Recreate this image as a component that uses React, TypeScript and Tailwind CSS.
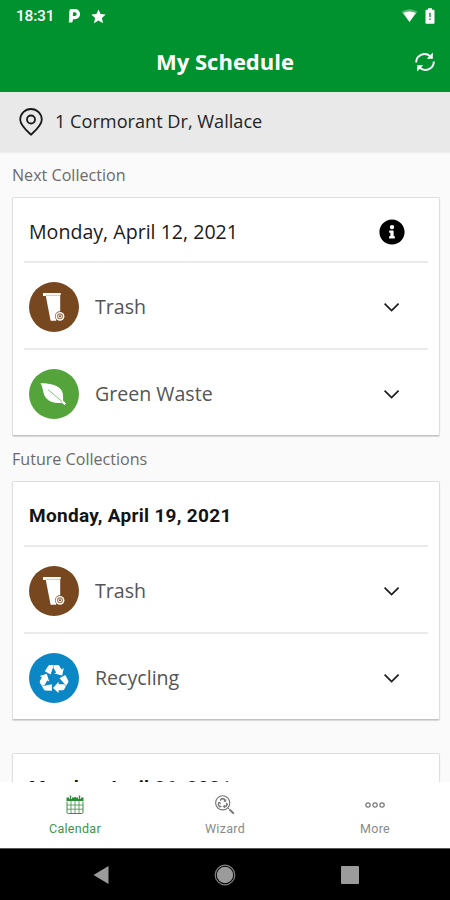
import type { ReactNode } from 'react';
import { FaInfoCircle } from 'react-icons/fa';

type WasteKind = 'trash' | 'green' | 'recycling';

interface Collection {
  date: string;
  next?: boolean;
  items: { kind: WasteKind; name: string }[];
}

const nextCollection: Collection = {
  date: 'Monday, April 12, 2021',
  next: true,
  items: [
    { kind: 'trash', name: 'Trash' },
    { kind: 'green', name: 'Green Waste' },
  ],
};

const futureCollections: Collection[] = [
  {
    date: 'Monday, April 19, 2021',
    items: [
      { kind: 'trash', name: 'Trash' },
      { kind: 'recycling', name: 'Recycling' },
    ],
  },
  {
    date: 'Monday, April 26, 2021',
    items: [],
  },
];

const wasteColors: Record<WasteKind, string> = {
  trash: 'bg-[#774720]',
  green: 'bg-[#55a43b]',
  recycling: 'bg-[#0a87c4]',
};

function BinIcon() {
  return (
    <svg width="50" height="50" viewBox="0 0 50 50" fill="none">
      <path d="M14 11H31.7V13H31.2V31L27 38.7H21.6L16.8 14H14Z" fill="#fff" />
      <path d="M16.5 13.3H31" stroke="#c9b3a1" strokeWidth="0.8" />
      <circle cx="31" cy="34.3" r="5" fill="#774720" />
      <circle cx="31" cy="34.3" r="4.4" fill="#fff" />
      <circle cx="31" cy="34.3" r="2.4" stroke="#9b7658" strokeWidth="1.1" />
      <circle cx="31" cy="34.3" r="1" fill="#774720" />
    </svg>
  );
}

function LeafIcon() {
  return (
    <svg width="50" height="50" viewBox="0 0 50 50" fill="none">
      <path
        d="M11.5 14C20 14.5 27.5 15.5 31.5 20C34.3 23.2 34.4 27.5 34 31.5L37 34.5L35.5 36L32.5 33.8C28 34.6 21.5 33.8 17.5 29.5C13.6 25.3 14.3 18.5 11.5 14Z"
        fill="#fff"
      />
      <path d="M19 20.5L33.5 33" stroke="#7fba6b" strokeWidth="0.9" />
    </svg>
  );
}

// One folded arrow, repeated every 120 degrees
function RecycleIcon() {
  return (
    <svg width="32" height="32" viewBox="-16 -16 32 32" fill="#fff">
      {[0, 120, 240].map((angle) => (
        <g key={angle} transform={`rotate(${angle} 0 1)`}>
          <path d="M-9.2 -6.8L-5.6 -12.2Q-5 -13 -4 -13H-0.2L-3.4 -3.4Z" />
          <path d="M0.4 -13H3.8Q4.8 -13 5.4 -12.1L7.5 -8.6L9.8 -9.9L8.2 -2.6L0.2 -4.4L2.2 -5.6L-0.7 -10.6Z" />
        </g>
      ))}
    </svg>
  );
}

function WasteIcon({ kind }: { kind: WasteKind }) {
  return (
    <div className={`flex size-[50px] shrink-0 items-center justify-center rounded-full ${wasteColors[kind]}`}>
      {kind === 'trash' && <BinIcon />}
      {kind === 'green' && <LeafIcon />}
      {kind === 'recycling' && <RecycleIcon />}
    </div>
  );
}

function Chevron() {
  return (
    <svg width="16" height="10" viewBox="0 0 16 10" fill="none" stroke="#1c1c1c" strokeWidth="1.7">
      <path d="M0.6 1.6L7.6 8.6L14.6 1.6" />
    </svg>
  );
}

function CollectionCard({ collection }: { collection: Collection }) {
  return (
    <div className="rounded-[2px] border border-[#dedede] border-b-[#c2c2c2] bg-white px-[11px] shadow-[0_1px_1px_rgba(0,0,0,0.14)]">
      <div className="flex h-[63px] items-center justify-between pl-[5px] pr-[23px] pt-1">
        {collection.next ? (
          <span className="text-[19.6px] text-[#1b1b1b]">{collection.date}</span>
        ) : (
          <span className="pt-[2px] font-['Roboto',sans-serif] text-[19px] font-bold tracking-[0.3px] text-[#141414]">
            {collection.date}
          </span>
        )}
        {collection.next && <FaInfoCircle size={26} className="text-black" />}
      </div>
      {collection.items.map((item) => (
        <div key={item.name} className="flex h-[87px] items-center border-t-2 border-[#ebebeb] pl-[5px] pr-[28px] pt-[3px]">
          <WasteIcon kind={item.kind} />
          <span className="ml-4 flex-1 text-[19.6px] text-[#555]">{item.name}</span>
          <Chevron />
        </div>
      ))}
    </div>
  );
}

function StatusBar() {
  return (
    <div className="flex h-8 items-center pl-4 pr-[15px] text-white">
      <span className="pt-[2px] font-['Roboto',sans-serif] text-[15.5px] font-medium tracking-[-0.2px]">18:31</span>
      <svg className="ml-[14px]" width="13" height="16" viewBox="0 0 13 16">
        <path
          fill="#fff"
          fillRule="evenodd"
          d="M3 1H7A5.1 5.1 0 0 1 7 11.2H5L4.6 13.5Q4.3 14.6 3.2 14.6H0.8L1.4 3Q1.5 1 3 1ZM5.2 4.2L4.8 8H6.8A1.9 1.9 0 0 0 6.8 4.2Z"
        />
      </svg>
      <svg className="ml-[10px]" width="15" height="15" viewBox="0 0 15 15">
        <path fill="#fff" d="M7.5 0.4L9.6 5.1L14.7 5.6L10.9 9L12 14.2L7.5 11.5L3 14.2L4.1 9L0.3 5.6L5.4 5.1Z" />
      </svg>
      <div className="flex-1" />
      <svg width="17" height="14" viewBox="0 0 17 14">
        <path fill="#fff" opacity="0.35" d="M0.5 2.8Q8.5 -2.5 16.5 2.8L8.5 13Z" />
        <path fill="#fff" d="M2.2 4Q8.5 1 14.8 4L8.5 13Z" />
      </svg>
      <svg className="ml-[7px]" width="10" height="16" viewBox="0 0 10 16">
        <path fill="#fff" d="M3 0.3H7V1.8H8.6Q9.5 1.8 9.5 2.8V14.8Q9.5 15.7 8.6 15.7H1.4Q0.5 15.7 0.5 14.8V2.8Q0.5 1.8 1.4 1.8H3Z" />
        <path stroke="#00922f" strokeWidth="1.4" d="M5 4.8V9.3M5 10.5V12" />
      </svg>
    </div>
  );
}

function SyncIcon() {
  return (
    <svg width="20" height="20" viewBox="0 0 20 20" fill="none" stroke="#fff" strokeWidth="1.9">
      <path d="M1.2 10.5C1 3.5 9.5 -0.5 15.2 4.2" />
      <path d="M18.8 9.5C19 16.5 10.5 20.5 4.8 15.8" />
      <path d="M17.8 0.5V6.8H11.8Z M2.2 19.5V13.2H8.2Z" fill="#fff" stroke="none" />
    </svg>
  );
}

function PinIcon() {
  return (
    <svg width="24" height="28" viewBox="0 0 24 28" fill="none" stroke="#1a1a1a" strokeWidth="1.8">
      <path d="M12 26.7C8.2 23.2 1.2 17.6 1.2 11.6A10.8 10.6 0 0 1 22.8 11.6C22.8 17.6 15.8 23.2 12 26.7Z" />
      <circle cx="12" cy="11.5" r="4" />
    </svg>
  );
}

function CalendarIcon() {
  return (
    <svg width="18" height="20" viewBox="0 0 18 20" fill="none" stroke="#3c8f45" strokeWidth="1">
      <path d="M1 6.5V17.2Q1 18.5 2.3 18.5H15.7Q17 18.5 17 17.2V6.5" />
      <path d="M1 10H17M1 14.2H17M5 6V18.5M9 6V18.5M13 6V18.5" strokeWidth="0.8" />
      <path d="M0.5 2.5H17.5V6H0.5Z" fill="#2d8b37" stroke="none" />
      <path d="M4.5 0.8V4M13.5 0.8V4" stroke="#fff" strokeWidth="3" />
      <path d="M4.5 0.5V4M13.5 0.5V4M9 2V4" stroke="#2d8b37" strokeWidth="1.4" />
    </svg>
  );
}

function WizardIcon() {
  return (
    <svg width="20" height="20" viewBox="0 0 20 20" fill="none" stroke="#747474">
      <circle cx="7.7" cy="7.8" r="7.1" strokeWidth="1.1" />
      <path d="M5.2 5.7L6.5 3.8H8.8L10.3 6M11.3 7.8L12.2 9.5L10.8 11.5H8.5M6.4 11.5H4.5L3.3 9.5L4.5 7.4" strokeWidth="1.4" />
      <path d="M8.8 6.3H10.8V4.3M9.8 10L8.3 11.5L9.8 13M2.9 8L4.8 7.2L5.5 9" />
      <path d="M13 13L14.4 14.4" />
      <path d="M14.4 14.4L18.8 18.6" strokeWidth="2" />
    </svg>
  );
}

function MoreIcon() {
  return (
    <svg width="20" height="20" viewBox="0 0 20 20" fill="none" stroke="#777" strokeWidth="1.2">
      <circle cx="3" cy="10" r="2.2" />
      <circle cx="10" cy="10" r="2.2" />
      <circle cx="17" cy="10" r="2.2" />
    </svg>
  );
}

function TabItem({ icon, label, active = false }: { icon: ReactNode; label: string; active?: boolean }) {
  return (
    <button className="flex flex-1 flex-col items-center pt-[13px]">
      {icon}
      <span
        className={`mt-[5px] font-['Roboto',sans-serif] text-[12.5px] leading-[18px] tracking-[0.3px] ${
          active ? 'text-[#3c9447]' : 'text-[#8a8a8a]'
        }`}
      >
        {label}
      </span>
    </button>
  );
}

function App() {
  return (
    <div className="flex h-[900px] w-[450px] flex-col overflow-hidden bg-[#fafafa] font-['Open_Sans','Noto_Sans',sans-serif]">
      <header className="h-[92px] shrink-0 bg-[#00922f]">
        <StatusBar />
        <div className="grid h-[60px] grid-cols-[1fr_auto_1fr] items-center">
          <span />
          <h1 className="pb-[2px] text-[22px] font-bold text-white">My Schedule</h1>
          <div className="flex justify-end pr-[15px]">
            <SyncIcon />
          </div>
        </div>
      </header>

      <div className="flex h-[61px] shrink-0 items-center gap-3 border-b border-[#eeeeee] bg-[#e9e9e9] pl-[19px]">
        <PinIcon />
        <span className="pb-[1px] text-[18.15px] text-[#242424]">1 Cormorant Dr, Wallace</span>
      </div>

      <main className="min-h-0 flex-1 overflow-hidden pl-3 pr-[10px]">
        <h2 className="flex h-11 items-center pt-[1px] text-[16.1px] text-[#6b6b6b]">Next Collection</h2>
        <CollectionCard collection={nextCollection} />
        <h2 className="flex h-[45px] items-center pt-[2px] text-[16.1px] text-[#6b6b6b]">Future Collections</h2>
        <div className="flex flex-col gap-[33px]">
          {futureCollections.map((collection) => (
            <CollectionCard key={collection.date} collection={collection} />
          ))}
        </div>
      </main>

      <nav className="flex h-[66px] shrink-0 bg-white">
        <TabItem icon={<CalendarIcon />} label="Calendar" active />
        <TabItem icon={<WizardIcon />} label="Wizard" />
        <TabItem icon={<MoreIcon />} label="More" />
      </nav>

      {/* Android navigation buttons */}
      <div className="flex h-[52px] shrink-0 items-center justify-center gap-[105px] border-t border-[#555] bg-black pl-[1px]">
        <svg width="16" height="20" viewBox="0 0 16 20">
          <path d="M15.5 1V19L0.5 10Z" fill="#9b9b9b" />
        </svg>
        <svg width="22" height="22" viewBox="0 0 22 22">
          <circle cx="11" cy="11" r="8.2" fill="#9b9b9b" />
          <circle cx="11" cy="11" r="9.8" fill="none" stroke="#858585" strokeWidth="1.2" />
        </svg>
        <div className="size-[18px] rounded-[1px] bg-[#9b9b9b]" />
      </div>
    </div>
  );
}

export default App;
